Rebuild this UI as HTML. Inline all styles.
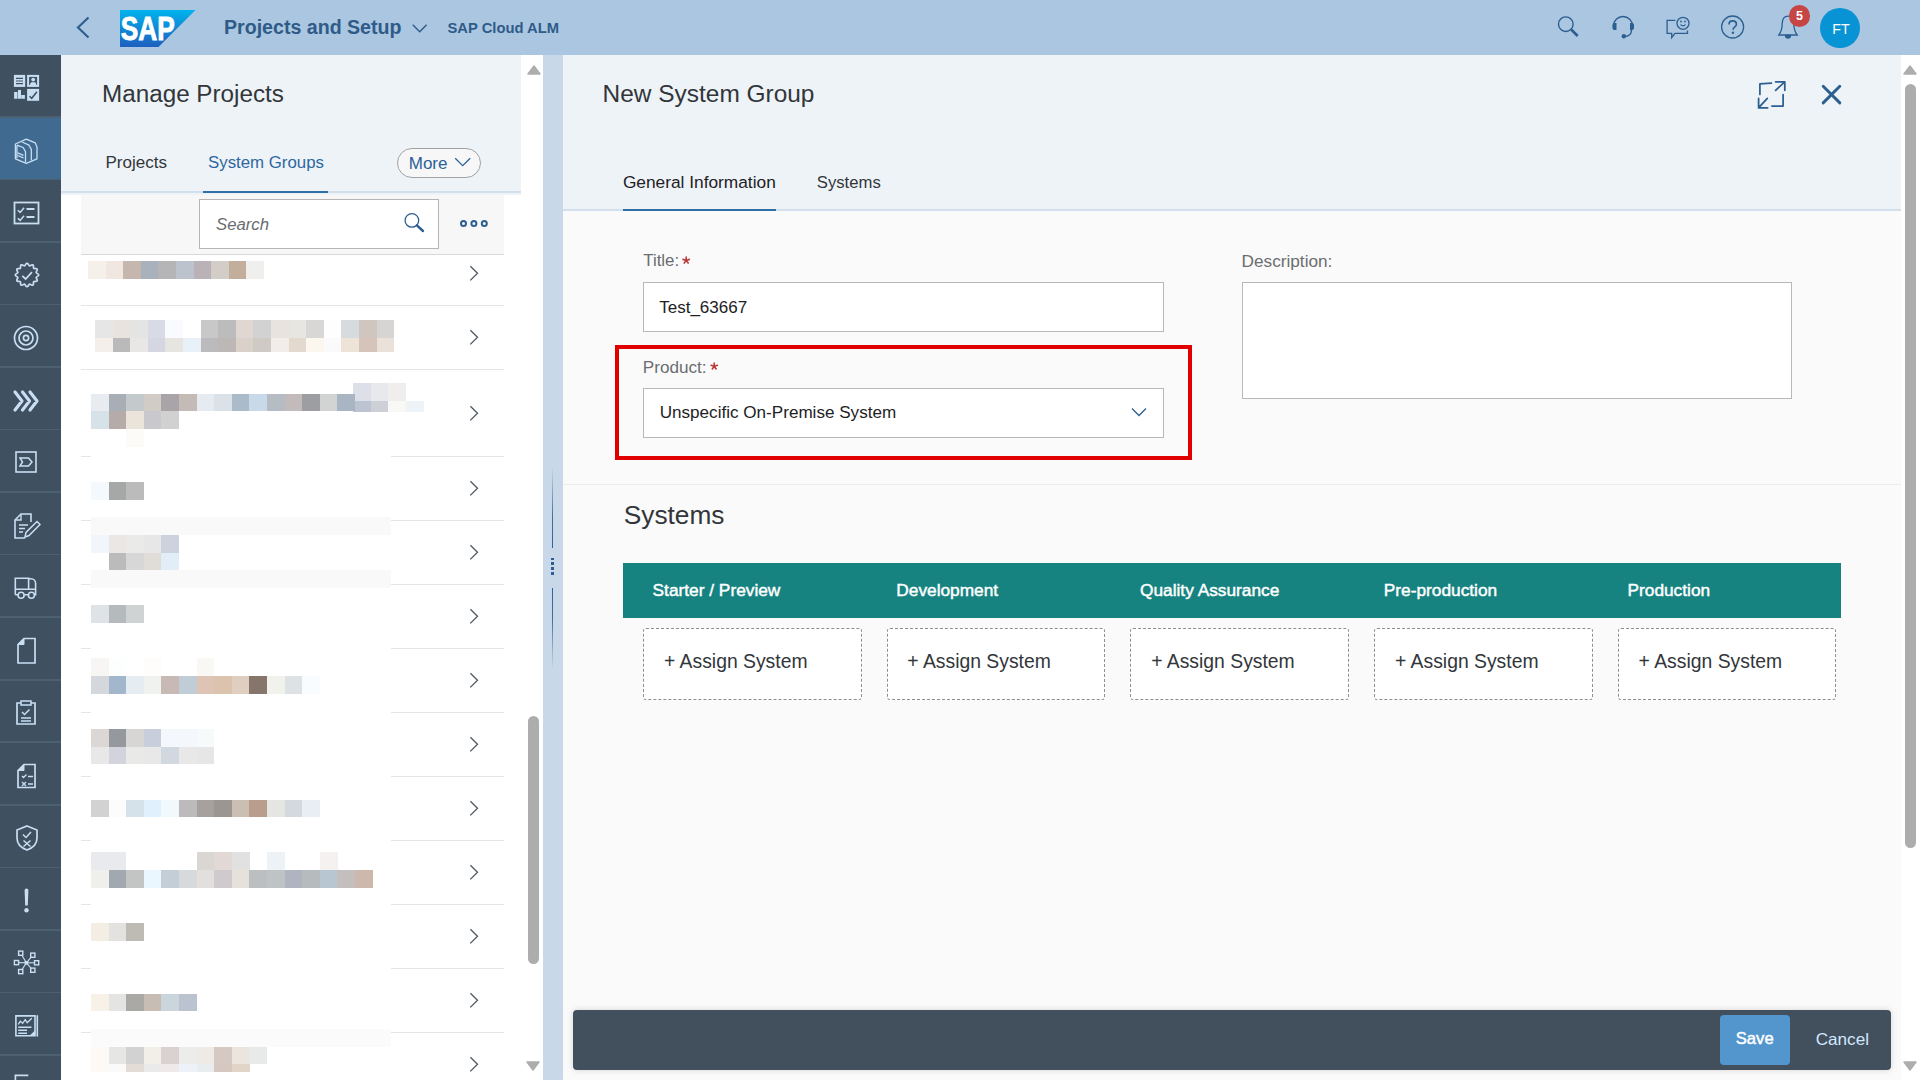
<!DOCTYPE html>
<html><head><meta charset="utf-8"><title>New System Group</title>
<style>
html,body{margin:0;padding:0;width:1920px;height:1080px;overflow:hidden;background:#fff;font-family:"Liberation Sans", sans-serif;}
.t{position:absolute;white-space:nowrap;line-height:1;}
.r{position:absolute;box-sizing:border-box;}
i{position:absolute;display:block;}
svg{overflow:visible}
</style></head><body>
<div class="r" style="left:0px;top:0px;width:1920px;height:55px;background:#abc6e0;"></div>
<svg style="position:absolute;left:74px;top:15px" width="20" height="25" viewBox="0 0 20 25"><path d="M14.5 2.5L4 12.5l10.5 10" fill="none" stroke="#2e5f8f" stroke-width="2.2"/></svg>
<svg style="position:absolute;left:120px;top:10px" width="76" height="37" viewBox="0 0 76 37">
<defs><linearGradient id="sg" x1="0" y1="0" x2="0" y2="1"><stop offset="0" stop-color="#00b3ec"/><stop offset="1" stop-color="#1f5fbf"/></linearGradient></defs>
<path d="M0 0h75.5L38.5 37H0z" fill="url(#sg)"/>
<text x="0.8" y="29.7" font-family="Liberation Sans" font-weight="bold" font-size="33" fill="#fff" stroke="#fff" stroke-width="0.9" textLength="54" lengthAdjust="spacingAndGlyphs">SAP</text>
</svg>
<div class="t" style="left:224px;top:18.01px;font-size:19.6px;color:#2e5b88;font-weight:bold;font-style:normal;">Projects and Setup</div>
<svg style="position:absolute;left:412.3px;top:24.3px" width="16" height="10" viewBox="0 0 16 10"><path d="M0.8 0.8l6.9 6.9 6.9-6.9" fill="none" stroke="#2e5b88" stroke-width="1.4"/></svg>
<div class="t" style="left:447.5px;top:20.81px;font-size:14.76px;color:#2e5b88;font-weight:bold;font-style:normal;">SAP Cloud ALM</div>
<svg style="position:absolute;left:1555px;top:14px" width="26" height="26" viewBox="0 0 26 26" fill="none" stroke="#2c5f90"><circle cx="10.8" cy="10.2" r="7.3" stroke-width="1.4"/><path d="M16.2 15.5l6.5 6.5" stroke-width="2.6"/></svg>
<svg style="position:absolute;left:1609px;top:12px" width="28" height="28" viewBox="0 0 28 28" fill="none" stroke="#2c5f90">
<path d="M4.5 15v-1.2a9.5 9.3 0 0 1 19 0v1.2" stroke-width="1.4"/>
<path d="M5 11h2.5v7H5a2 2 0 0 1-1.5-2v-3A2 2 0 0 1 5 11z" fill="#2c5f90" stroke="none"/>
<path d="M21 11h2.5a2 2 0 0 1 1.5 2v3a2 2 0 0 1-1.5 2H21z" fill="#2c5f90" stroke="none"/>
<path d="M22.5 18c0 4.5-3.5 6.5-7.5 6.5" stroke-width="1.4"/>
<circle cx="14.8" cy="24.3" r="2.2" fill="#2c5f90" stroke="none"/>
</svg>
<svg style="position:absolute;left:1664px;top:11px" width="30" height="30" viewBox="0 0 30 30" fill="none" stroke="#2c5f90" stroke-width="1.3">
<path d="M11.4 9.4H3.1v12.9h4.6v4.2l3.3-4.2h12.5v-2.9"/>
<circle cx="19" cy="12.3" r="6"/>
<path d="M16.5 13.5c1.3 1.8 3.7 1.8 5 0" stroke-width="1.2"/>
<circle cx="17" cy="10.5" r="0.9" fill="#2c5f90" stroke="none"/><circle cx="21" cy="10.5" r="0.9" fill="#2c5f90" stroke="none"/>
</svg>
<svg style="position:absolute;left:1720px;top:15px" width="26" height="26" viewBox="0 0 26 26" fill="none" stroke="#2c5f90">
<circle cx="12.6" cy="12" r="11" stroke-width="1.3"/>
<path d="M9 9.5c0-2.3 1.6-3.6 3.7-3.6s3.7 1.3 3.7 3.3c0 2.6-3.4 2.7-3.4 5.6" stroke-width="1.6"/>
<circle cx="12.9" cy="17.7" r="1.2" fill="#2c5f90" stroke="none"/>
</svg>
<svg style="position:absolute;left:1776px;top:13px" width="26" height="27" viewBox="0 0 26 27" fill="none" stroke="#2c5f90" stroke-width="1.3">
<path d="M12 3.2c-3.8 0-5.8 3-5.8 7.3 0 6-1.4 9-3.4 11.5h18.4c-2-2.5-3.4-5.5-3.4-11.5 0-4.3-2-7.3-5.8-7.3z"/>
<path d="M9.5 22.5a2.5 2.5 0 0 0 5 0z" fill="#2c5f90"/>
</svg>
<div class="r" style="left:1788.7px;top:5.2px;width:21.5px;height:21.5px;border-radius:50%;background:#c64545"></div>
<div class="t" style="left:1795.9px;top:9.62px;font-size:12.5px;color:#fff;font-weight:bold;font-style:normal;">5</div>
<div class="r" style="left:1820px;top:8px;width:40px;height:40px;border-radius:50%;background:#0893d4"></div>
<div class="t" style="left:1832.3px;top:21.68px;font-size:14.2px;color:#fff;font-weight:normal;font-style:normal;">FT</div>
<div class="r" style="left:0px;top:55px;width:61px;height:1025px;background:#3f5061;"></div>
<div class="r" style="left:0px;top:115.90px;width:61px;height:1.7px;background:#4d6072;"></div>
<div class="r" style="left:0px;top:178.45px;width:61px;height:1.7px;background:#4d6072;"></div>
<div class="r" style="left:0px;top:241.00px;width:61px;height:1.7px;background:#4d6072;"></div>
<div class="r" style="left:0px;top:303.55px;width:61px;height:1.7px;background:#4d6072;"></div>
<div class="r" style="left:0px;top:366.10px;width:61px;height:1.7px;background:#4d6072;"></div>
<div class="r" style="left:0px;top:428.65px;width:61px;height:1.7px;background:#4d6072;"></div>
<div class="r" style="left:0px;top:491.20px;width:61px;height:1.7px;background:#4d6072;"></div>
<div class="r" style="left:0px;top:553.75px;width:61px;height:1.7px;background:#4d6072;"></div>
<div class="r" style="left:0px;top:616.30px;width:61px;height:1.7px;background:#4d6072;"></div>
<div class="r" style="left:0px;top:678.85px;width:61px;height:1.7px;background:#4d6072;"></div>
<div class="r" style="left:0px;top:741.40px;width:61px;height:1.7px;background:#4d6072;"></div>
<div class="r" style="left:0px;top:803.95px;width:61px;height:1.7px;background:#4d6072;"></div>
<div class="r" style="left:0px;top:866.50px;width:61px;height:1.7px;background:#4d6072;"></div>
<div class="r" style="left:0px;top:929.05px;width:61px;height:1.7px;background:#4d6072;"></div>
<div class="r" style="left:0px;top:991.60px;width:61px;height:1.7px;background:#4d6072;"></div>
<div class="r" style="left:0px;top:1054.15px;width:61px;height:1.7px;background:#4d6072;"></div>
<div class="r" style="left:0px;top:1116.70px;width:61px;height:1.7px;background:#4d6072;"></div>
<div class="r" style="left:0px;top:118px;width:61px;height:61px;background:#406a8f;"></div>
<svg style="position:absolute;left:0;top:0" width="1" height="1" fill="none" stroke="#c8def3">
<rect x="13.9" y="74.9" width="11.3" height="12" fill="#c8def3" stroke="none"/>
<path d="M16 78.4h7M16 81h7M16 83.6h7" stroke="#3f5061" stroke-width="1.1"/>
<rect x="28.1" y="75.9" width="10" height="10" stroke-width="2"/>
<circle cx="33.2" cy="79.6" r="1.9" fill="#c8def3" stroke="none"/>
<path d="M30.2 85.1v-1.2c0-1 1-1.6 2-1.6h2c1 0 2 .6 2 1.6v1.2z" fill="#c8def3" stroke="none"/>
<path d="M14.1 98.8V92h3.4v6.8zM18 98.8V90h3v8.8zM21.2 98.8V95h3.7v3.8z" fill="#c8def3" stroke="none"/>
<rect x="27.1" y="88.9" width="12" height="11.9" fill="#c8def3" stroke="none"/>
<path d="M29.5 96.3l2.2 2 5.2-6.6" stroke="#3f5061" stroke-width="1.5"/>
</svg>
<svg style="position:absolute;left:0;top:0" width="1" height="1" fill="none" stroke="#c8def3" stroke-width="1.3" stroke-linejoin="round">
<path d="M15.4 144L26.3 139.1L35.2 142.8L37 147.1V158.8L26.3 163.4L15.4 158.8Z"/>
<path d="M16.9 145.2L23.2 147.5L25.5 151.8V162.2M16.9 145.2V158.3"/>
<path d="M22 142L29 145.2L31.3 149.4V160.3"/>
<path d="M17.7 152.9L23.5 155.3M17.7 155.5L23.5 157.9"/>
</svg>
<svg style="position:absolute;left:13px;top:201px" width="27" height="24" viewBox="0 0 27 24" fill="none" stroke="#c8def3" stroke-width="1.6">
<rect x="1.5" y="1.5" width="24" height="21" stroke-width="1.8"/>
<path d="M4.8 9.2l2.3 2.2 4-4.6M4.8 17.2l2.3 2.2 4-4.6" stroke-width="1.5"/>
<path d="M13.5 8h8M13.5 16h8" stroke-width="2"/>
</svg>
<svg style="position:absolute;left:13.5px;top:262px" width="26" height="26" viewBox="0 0 26 26" fill="none" stroke="#c8def3" stroke-width="1.6">
<path d="M13.00 1.30 L13.60 1.53 L14.14 2.12 L14.61 2.87 L15.02 3.50 L15.46 3.82 L16.00 3.77 L16.68 3.42 L17.45 3.01 L18.22 2.76 L18.85 2.87 L19.26 3.36 L19.43 4.15 L19.46 5.03 L19.50 5.78 L19.72 6.28 L20.22 6.50 L20.97 6.54 L21.85 6.57 L22.64 6.74 L23.13 7.15 L23.24 7.78 L22.99 8.55 L22.58 9.32 L22.23 10.00 L22.18 10.54 L22.50 10.98 L23.13 11.39 L23.88 11.86 L24.47 12.40 L24.70 13.00 L24.47 13.60 L23.88 14.14 L23.13 14.61 L22.50 15.02 L22.18 15.46 L22.23 16.00 L22.58 16.68 L22.99 17.45 L23.24 18.22 L23.13 18.85 L22.64 19.26 L21.85 19.43 L20.97 19.46 L20.22 19.50 L19.72 19.72 L19.50 20.22 L19.46 20.97 L19.43 21.85 L19.26 22.64 L18.85 23.13 L18.22 23.24 L17.45 22.99 L16.68 22.58 L16.00 22.23 L15.46 22.18 L15.02 22.50 L14.61 23.13 L14.14 23.88 L13.60 24.47 L13.00 24.70 L12.40 24.47 L11.86 23.88 L11.39 23.13 L10.98 22.50 L10.54 22.18 L10.00 22.23 L9.32 22.58 L8.55 22.99 L7.78 23.24 L7.15 23.13 L6.74 22.64 L6.57 21.85 L6.54 20.97 L6.50 20.22 L6.28 19.72 L5.78 19.50 L5.03 19.46 L4.15 19.43 L3.36 19.26 L2.87 18.85 L2.76 18.22 L3.01 17.45 L3.42 16.68 L3.77 16.00 L3.82 15.46 L3.50 15.02 L2.87 14.61 L2.12 14.14 L1.53 13.60 L1.30 13.00 L1.53 12.40 L2.12 11.86 L2.87 11.39 L3.50 10.98 L3.82 10.54 L3.77 10.00 L3.42 9.32 L3.01 8.55 L2.76 7.78 L2.87 7.15 L3.36 6.74 L4.15 6.57 L5.03 6.54 L5.78 6.50 L6.28 6.28 L6.50 5.78 L6.54 5.03 L6.57 4.15 L6.74 3.36 L7.15 2.87 L7.78 2.76 L8.55 3.01 L9.32 3.42 L10.00 3.77 L10.54 3.82 L10.98 3.50 L11.39 2.87 L11.86 2.12 L12.40 1.53 L13.00 1.30Z" stroke-width="1.7"/>
<path d="M8.3 13.8l3.3 3.2 6.4-6.8" stroke-width="1.8"/>
</svg>
<svg style="position:absolute;left:13px;top:325px" width="26" height="26" viewBox="0 0 26 26" fill="none" stroke="#c8def3" stroke-width="1.6">
<circle cx="13" cy="13" r="11.5" stroke-width="1.7"/>
<circle cx="13" cy="13" r="7" stroke-width="1.7"/>
<circle cx="13" cy="13" r="2.6" stroke-width="1.7"/>
</svg>
<svg style="position:absolute;left:13px;top:389px" width="27" height="24" viewBox="0 0 27 24" fill="none" stroke="#c8def3" stroke-width="1.6">
<path d="M2 3l7 9-7 9M9.5 3l7 9-7 9M17 3l7 9-7 9" stroke-width="3.2" stroke-linejoin="round" stroke-linecap="round"/>
</svg>
<svg style="position:absolute;left:15px;top:451px" width="22" height="22" viewBox="0 0 22 22" fill="none" stroke="#c8def3" stroke-width="1.6">
<rect x="1" y="1" width="20" height="20" stroke-width="1.6"/>
<path d="M5 7h8.5l3.5 4-3.5 4H5l2.5-4z" stroke-width="1.5"/>
</svg>
<svg style="position:absolute;left:13px;top:512px" width="28" height="28" viewBox="0 0 28 28" fill="none" stroke="#c8def3" stroke-width="1.6">
<path d="M12 26H2V8l6-6h10v8" stroke-width="1.6"/>
<path d="M2 8h6V2" stroke-width="1.4"/>
<path d="M6 13h9M6 16.5h6M6 20h4" stroke-width="1.4"/>
<path d="M12 25l1-4.5 11-11 3 3-11 11z" stroke-width="1.5"/>
</svg>
<svg style="position:absolute;left:0;top:0" width="1" height="1" fill="none" stroke="#c8def3" stroke-width="1.6">
<path d="M15.3 594.8V578.3H28.6V589.3"/>
<path d="M28.6 578.8H31a4.6 4.6 0 0 1 4.6 4.6V594.8H15.3M15.3 589.3H35.6"/>
<circle cx="21.1" cy="595.2" r="3" fill="#3f5061"/>
<circle cx="31.4" cy="595.2" r="3" fill="#3f5061"/>
</svg>
<svg style="position:absolute;left:16px;top:637px" width="21" height="28" viewBox="0 0 21 28" fill="none" stroke="#c8def3" stroke-width="1.6">
<path d="M2 7.5l6-6h11v24.5H2z" stroke-width="1.7"/>
<path d="M2 7.5h6v-6z" fill="#c8def3" stroke-width="1"/>
</svg>
<svg style="position:absolute;left:15px;top:698px" width="22" height="28" viewBox="0 0 22 28" fill="none" stroke="#c8def3" stroke-width="1.6">
<path d="M6 5H2v21h18V5h-4" stroke-width="1.7"/>
<path d="M6 3h10v4H6z" stroke-width="1.5"/>
<path d="M7 14l2.5 2.5 5-5" stroke-width="1.5"/>
<path d="M6 20h10M6 23h10" stroke-width="1.4"/>
</svg>
<svg style="position:absolute;left:16px;top:763px" width="21" height="26" viewBox="0 0 21 26" fill="none" stroke="#c8def3" stroke-width="1.6">
<path d="M2 7.5l6-6h11v23H2z" stroke-width="1.7"/>
<path d="M2 7.5h6v-6z" fill="#c8def3" stroke-width="1"/>
<path d="M6 13l1.5 1.5 3-3M6 19l4 4M10 19l-4 4M12 13.5h5M12 21h5" stroke-width="1.3"/>
</svg>
<svg style="position:absolute;left:14.8px;top:824px" width="24" height="28" viewBox="0 0 24 28" fill="none" stroke="#c8def3" stroke-width="1.6">
<path d="M12 2l10 4v8c0 6-4.5 10-10 12C6.5 24 2 20 2 14V6z" stroke-width="1.7"/>
<path d="M8 10.5l3 3 5-5.5M8.5 16.5l7 6M15.5 16.5l-7 6" stroke-width="1.5"/>
</svg>
<svg style="position:absolute;left:0;top:0" width="1" height="1">
<path d="M24.6 890.5a1.9 1.9 0 0 1 3.8 0L27.8 905.5h-2.6z" fill="#c8def3"/>
<circle cx="26.5" cy="910.3" r="2.2" fill="#c8def3"/>
</svg>
<svg style="position:absolute;left:0;top:0" width="1" height="1" fill="none" stroke="#c8def3"><path d="M26.4 962.8L20.7 953.2" stroke-width="1.1"/><path d="M26.4 962.8L32.8 955.2" stroke-width="1.1"/><path d="M26.4 962.8L16.5 962.6" stroke-width="1.1"/><path d="M26.4 962.8L36.6 962.8" stroke-width="1.1"/><path d="M26.4 962.8L20.7 971.6" stroke-width="1.1"/><path d="M26.4 962.8L32.8 970.2" stroke-width="1.1"/><rect x="18.6" y="951.1" width="4.2" height="4.2" fill="#3f5061" stroke-width="1.4"/><rect x="30.7" y="953.1" width="4.2" height="4.2" fill="#3f5061" stroke-width="1.4"/><rect x="14.4" y="960.5" width="4.2" height="4.2" fill="#3f5061" stroke-width="1.4"/><rect x="34.5" y="960.7" width="4.2" height="4.2" fill="#3f5061" stroke-width="1.4"/><rect x="18.6" y="969.5" width="4.2" height="4.2" fill="#3f5061" stroke-width="1.4"/><rect x="30.7" y="968.1" width="4.2" height="4.2" fill="#3f5061" stroke-width="1.4"/><rect x="24.6" y="961" width="3.6" height="3.6" fill="#c8def3" stroke="none"/></svg>
<svg style="position:absolute;left:0;top:0" width="1" height="1" fill="none" stroke="#c8def3">
<path d="M15.9 1015.9H35V1035.8H15.9Z" stroke-width="1.6"/>
<path d="M37.3 1015.2V1036.6" stroke-width="1.6"/>
<path d="M29.8 1035.6L35.2 1030.2V1035.6Z" fill="#c8def3" stroke="none"/>
<path d="M18.2 1024.3L20.3 1021.3L22.6 1023.3L25.2 1019.6L27.2 1022.7L31.8 1018.2" stroke-width="1.3"/>
<path d="M18.2 1027.3H31.5M18.2 1030.3H27M18.2 1033.2H27" stroke-width="1.4"/>
</svg>
<svg style="position:absolute;left:0;top:0" width="1" height="1" fill="none" stroke="#c8def3"><path d="M15.4 1081V1075.3H28.3" stroke-width="1.7"/></svg>
<div class="r" style="left:61px;top:55px;width:460px;height:140px;background:#eef3f8;"></div>
<div class="t" style="left:102px;top:81.97px;font-size:24.25px;color:#32363a;font-weight:normal;font-style:normal;">Manage Projects</div>
<div class="t" style="left:105.4px;top:154.32px;font-size:17.05px;color:#32363a;font-weight:normal;font-style:normal;">Projects</div>
<div class="t" style="left:208px;top:154.50px;font-size:16.83px;color:#2d67a0;font-weight:normal;font-style:normal;">System Groups</div>
<div class="r" style="left:397px;top:148.3px;width:83.5px;height:29.5px;border:1px solid #a0a2a4;border-radius:15px;background:#f7f7f7"></div>
<div class="t" style="left:408.75px;top:155.01px;font-size:17.0px;color:#2a6199;font-weight:normal;font-style:normal;">More</div>
<svg style="position:absolute;left:454.3px;top:157px" width="17" height="11" viewBox="0 0 17 11"><path d="M1.2 1.2l7.5 7.5 7.5-7.5" fill="none" stroke="#2a6199" stroke-width="1.3"/></svg>
<div class="r" style="left:61px;top:190.8px;width:460px;height:2.4px;background:#d2dfec;"></div>
<div class="r" style="left:203px;top:190.8px;width:125px;height:2.4px;background:#306ea6;"></div>
<div class="r" style="left:61px;top:195px;width:460px;height:885px;background:#ffffff;"></div>
<div class="r" style="left:81px;top:195px;width:423px;height:59px;background:#f7f7f7;"></div>
<div class="r" style="left:81px;top:254px;width:423px;height:1.2px;background:#d9d9d9;"></div>
<div class="r" style="left:199.4px;top:199.4px;width:239.4px;height:49.3px;border:1px solid #b5b5b5;background:#fff"></div>
<div class="t" style="left:216px;top:216.84px;font-size:16.73px;color:#6a6d70;font-weight:normal;font-style:italic;">Search</div>
<svg style="position:absolute;left:0;top:0" width="1" height="1" fill="none" stroke="#2c5f90"><circle cx="411.9" cy="220.4" r="6.8" stroke-width="1.3"/><path d="M416.9 225.3L423 231" stroke-width="2.4" stroke-linecap="round"/></svg>
<svg style="position:absolute;left:0;top:0" width="1" height="1" fill="none" stroke="#2c5f90" stroke-width="2"><circle cx="463.5" cy="223.5" r="2.5"/><circle cx="473.9" cy="223.5" r="2.5"/><circle cx="484.3" cy="223.5" r="2.5"/></svg>
<div class="r" style="left:81px;top:305px;width:423px;height:1.2px;background:#e5e5e5;"></div>
<div class="r" style="left:81px;top:369px;width:423px;height:1.2px;background:#e5e5e5;"></div>
<div class="r" style="left:81px;top:456px;width:10px;height:1.2px;background:#e5e5e5;"></div>
<div class="r" style="left:391px;top:456px;width:113px;height:1.2px;background:#e5e5e5;"></div>
<div class="r" style="left:81px;top:520px;width:10px;height:1.2px;background:#e5e5e5;"></div>
<div class="r" style="left:391px;top:520px;width:113px;height:1.2px;background:#e5e5e5;"></div>
<div class="r" style="left:81px;top:584px;width:10px;height:1.2px;background:#e5e5e5;"></div>
<div class="r" style="left:391px;top:584px;width:113px;height:1.2px;background:#e5e5e5;"></div>
<div class="r" style="left:81px;top:648px;width:10px;height:1.2px;background:#e5e5e5;"></div>
<div class="r" style="left:391px;top:648px;width:113px;height:1.2px;background:#e5e5e5;"></div>
<div class="r" style="left:81px;top:712px;width:10px;height:1.2px;background:#e5e5e5;"></div>
<div class="r" style="left:391px;top:712px;width:113px;height:1.2px;background:#e5e5e5;"></div>
<div class="r" style="left:81px;top:776px;width:10px;height:1.2px;background:#e5e5e5;"></div>
<div class="r" style="left:391px;top:776px;width:113px;height:1.2px;background:#e5e5e5;"></div>
<div class="r" style="left:81px;top:840px;width:10px;height:1.2px;background:#e5e5e5;"></div>
<div class="r" style="left:391px;top:840px;width:113px;height:1.2px;background:#e5e5e5;"></div>
<div class="r" style="left:81px;top:904px;width:10px;height:1.2px;background:#e5e5e5;"></div>
<div class="r" style="left:391px;top:904px;width:113px;height:1.2px;background:#e5e5e5;"></div>
<div class="r" style="left:81px;top:968px;width:10px;height:1.2px;background:#e5e5e5;"></div>
<div class="r" style="left:391px;top:968px;width:113px;height:1.2px;background:#e5e5e5;"></div>
<div class="r" style="left:81px;top:1032px;width:10px;height:1.2px;background:#e5e5e5;"></div>
<div class="r" style="left:391px;top:1032px;width:113px;height:1.2px;background:#e5e5e5;"></div>
<svg style="position:absolute;left:468px;top:264px" width="12" height="18" viewBox="0 0 12 18"><path d="M2.4 2.2l7.1 7.1-7.2 7.1" fill="none" stroke="#4e5864" stroke-width="1.3"/></svg>
<svg style="position:absolute;left:468px;top:328px" width="12" height="18" viewBox="0 0 12 18"><path d="M2.4 2.2l7.1 7.1-7.2 7.1" fill="none" stroke="#4e5864" stroke-width="1.3"/></svg>
<svg style="position:absolute;left:468px;top:404px" width="12" height="18" viewBox="0 0 12 18"><path d="M2.4 2.2l7.1 7.1-7.2 7.1" fill="none" stroke="#4e5864" stroke-width="1.3"/></svg>
<svg style="position:absolute;left:468px;top:479px" width="12" height="18" viewBox="0 0 12 18"><path d="M2.4 2.2l7.1 7.1-7.2 7.1" fill="none" stroke="#4e5864" stroke-width="1.3"/></svg>
<svg style="position:absolute;left:468px;top:543px" width="12" height="18" viewBox="0 0 12 18"><path d="M2.4 2.2l7.1 7.1-7.2 7.1" fill="none" stroke="#4e5864" stroke-width="1.3"/></svg>
<svg style="position:absolute;left:468px;top:607px" width="12" height="18" viewBox="0 0 12 18"><path d="M2.4 2.2l7.1 7.1-7.2 7.1" fill="none" stroke="#4e5864" stroke-width="1.3"/></svg>
<svg style="position:absolute;left:468px;top:671px" width="12" height="18" viewBox="0 0 12 18"><path d="M2.4 2.2l7.1 7.1-7.2 7.1" fill="none" stroke="#4e5864" stroke-width="1.3"/></svg>
<svg style="position:absolute;left:468px;top:735px" width="12" height="18" viewBox="0 0 12 18"><path d="M2.4 2.2l7.1 7.1-7.2 7.1" fill="none" stroke="#4e5864" stroke-width="1.3"/></svg>
<svg style="position:absolute;left:468px;top:799px" width="12" height="18" viewBox="0 0 12 18"><path d="M2.4 2.2l7.1 7.1-7.2 7.1" fill="none" stroke="#4e5864" stroke-width="1.3"/></svg>
<svg style="position:absolute;left:468px;top:863px" width="12" height="18" viewBox="0 0 12 18"><path d="M2.4 2.2l7.1 7.1-7.2 7.1" fill="none" stroke="#4e5864" stroke-width="1.3"/></svg>
<svg style="position:absolute;left:468px;top:927px" width="12" height="18" viewBox="0 0 12 18"><path d="M2.4 2.2l7.1 7.1-7.2 7.1" fill="none" stroke="#4e5864" stroke-width="1.3"/></svg>
<svg style="position:absolute;left:468px;top:991px" width="12" height="18" viewBox="0 0 12 18"><path d="M2.4 2.2l7.1 7.1-7.2 7.1" fill="none" stroke="#4e5864" stroke-width="1.3"/></svg>
<svg style="position:absolute;left:468px;top:1055px" width="12" height="18" viewBox="0 0 12 18"><path d="M2.4 2.2l7.1 7.1-7.2 7.1" fill="none" stroke="#4e5864" stroke-width="1.3"/></svg>
<i style="left:88.0px;top:261px;width:17.9px;height:17.8px;background:#f6f0ea"></i>
<i style="left:105.6px;top:261px;width:17.9px;height:17.8px;background:#f1e7e1"></i>
<i style="left:123.2px;top:261px;width:17.9px;height:17.8px;background:#c6b7ae"></i>
<i style="left:140.8px;top:261px;width:17.9px;height:17.8px;background:#a9b2bc"></i>
<i style="left:158.4px;top:261px;width:17.9px;height:17.8px;background:#b5b5b7"></i>
<i style="left:176.0px;top:261px;width:17.9px;height:17.8px;background:#bdc3cd"></i>
<i style="left:193.6px;top:261px;width:17.9px;height:17.8px;background:#bbb2b8"></i>
<i style="left:211.2px;top:261px;width:17.9px;height:17.8px;background:#d3cdc8"></i>
<i style="left:228.8px;top:261px;width:17.9px;height:17.8px;background:#c2ae9a"></i>
<i style="left:246.4px;top:261px;width:17.9px;height:17.8px;background:#efefed"></i>
<i style="left:95.0px;top:320px;width:17.9px;height:18px;background:#e6e6e6"></i>
<i style="left:112.6px;top:320px;width:17.9px;height:18px;background:#e8e3dd"></i>
<i style="left:130.2px;top:320px;width:17.9px;height:18px;background:#e4e4e4"></i>
<i style="left:147.8px;top:320px;width:17.9px;height:18px;background:#d8dae6"></i>
<i style="left:165.4px;top:320px;width:17.9px;height:18px;background:#fafbfe"></i>
<i style="left:200.6px;top:320px;width:17.9px;height:18px;background:#c8c8c9"></i>
<i style="left:218.2px;top:320px;width:17.9px;height:18px;background:#bcbcbd"></i>
<i style="left:235.8px;top:320px;width:17.9px;height:18px;background:#e0d7d3"></i>
<i style="left:253.4px;top:320px;width:17.9px;height:18px;background:#d2d2d2"></i>
<i style="left:271.0px;top:320px;width:17.9px;height:18px;background:#e8e3de"></i>
<i style="left:288.6px;top:320px;width:17.9px;height:18px;background:#e8e6e1"></i>
<i style="left:306.2px;top:320px;width:17.9px;height:18px;background:#d8d7d5"></i>
<i style="left:323.8px;top:320px;width:17.9px;height:18px;background:#fefefe"></i>
<i style="left:341.4px;top:320px;width:17.9px;height:18px;background:#d6dbde"></i>
<i style="left:359.0px;top:320px;width:17.9px;height:18px;background:#d0c6c0"></i>
<i style="left:376.6px;top:320px;width:17.9px;height:18px;background:#d6d5d3"></i>
<i style="left:95.0px;top:338px;width:17.9px;height:14px;background:#f4efeb"></i>
<i style="left:112.6px;top:338px;width:17.9px;height:14px;background:#bababa"></i>
<i style="left:130.2px;top:338px;width:17.9px;height:14px;background:#e9e6e6"></i>
<i style="left:147.8px;top:338px;width:17.9px;height:14px;background:#d4d7e2"></i>
<i style="left:165.4px;top:338px;width:17.9px;height:14px;background:#e6e5e0"></i>
<i style="left:183.0px;top:338px;width:17.9px;height:14px;background:#e8f0f8"></i>
<i style="left:200.6px;top:338px;width:17.9px;height:14px;background:#bbbbbd"></i>
<i style="left:218.2px;top:338px;width:17.9px;height:14px;background:#bdb8b5"></i>
<i style="left:235.8px;top:338px;width:17.9px;height:14px;background:#dbd1cb"></i>
<i style="left:253.4px;top:338px;width:17.9px;height:14px;background:#cfcac4"></i>
<i style="left:271.0px;top:338px;width:17.9px;height:14px;background:#f2eceb"></i>
<i style="left:288.6px;top:338px;width:17.9px;height:14px;background:#e3d9cf"></i>
<i style="left:306.2px;top:338px;width:17.9px;height:14px;background:#fcf7ee"></i>
<i style="left:323.8px;top:338px;width:17.9px;height:14px;background:#fafafa"></i>
<i style="left:341.4px;top:338px;width:17.9px;height:14px;background:#ede3d7"></i>
<i style="left:359.0px;top:338px;width:17.9px;height:14px;background:#d6c4bb"></i>
<i style="left:376.6px;top:338px;width:17.9px;height:14px;background:#e9e1da"></i>
<i style="left:353.0px;top:383px;width:17.9px;height:18px;background:#dde0e8"></i>
<i style="left:370.6px;top:383px;width:17.9px;height:18px;background:#e8e9ed"></i>
<i style="left:388.2px;top:383px;width:17.9px;height:18px;background:#efeeec"></i>
<i style="left:353.0px;top:401px;width:17.9px;height:11px;background:#bbc4d0"></i>
<i style="left:370.6px;top:401px;width:17.9px;height:11px;background:#cdd0d6"></i>
<i style="left:388.2px;top:401px;width:17.9px;height:11px;background:#f8f8f6"></i>
<i style="left:405.8px;top:401px;width:17.9px;height:11px;background:#eef3f8"></i>
<i style="left:91.0px;top:394px;width:17.9px;height:17px;background:#e8ebf0"></i>
<i style="left:108.6px;top:394px;width:17.9px;height:17px;background:#a7aeb6"></i>
<i style="left:126.2px;top:394px;width:17.9px;height:17px;background:#c4c9cc"></i>
<i style="left:143.8px;top:394px;width:17.9px;height:17px;background:#d1cdc6"></i>
<i style="left:161.4px;top:394px;width:17.9px;height:17px;background:#a9a4a8"></i>
<i style="left:179.0px;top:394px;width:17.9px;height:17px;background:#c4bab6"></i>
<i style="left:196.6px;top:394px;width:17.9px;height:17px;background:#e6eaf1"></i>
<i style="left:214.2px;top:394px;width:17.9px;height:17px;background:#dbe1e9"></i>
<i style="left:231.8px;top:394px;width:17.9px;height:17px;background:#abbbc9"></i>
<i style="left:249.4px;top:394px;width:17.9px;height:17px;background:#c8d9ea"></i>
<i style="left:267.0px;top:394px;width:17.9px;height:17px;background:#b5bcc3"></i>
<i style="left:284.6px;top:394px;width:17.9px;height:17px;background:#c3bbbb"></i>
<i style="left:302.2px;top:394px;width:17.9px;height:17px;background:#9d9ea2"></i>
<i style="left:319.8px;top:394px;width:17.9px;height:17px;background:#d2d3d3"></i>
<i style="left:337.4px;top:394px;width:17.9px;height:17px;background:#a9b5c3"></i>
<i style="left:91.0px;top:411px;width:17.9px;height:18px;background:#d7e1e8"></i>
<i style="left:108.6px;top:411px;width:17.9px;height:18px;background:#b5aca9"></i>
<i style="left:126.2px;top:411px;width:17.9px;height:18px;background:#ebe4db"></i>
<i style="left:143.8px;top:411px;width:17.9px;height:18px;background:#c9c8cd"></i>
<i style="left:161.4px;top:411px;width:17.9px;height:18px;background:#d1d1d1"></i>
<i style="left:126.2px;top:429px;width:17.9px;height:18px;background:#fcfbf8"></i>
<i style="left:91.0px;top:482px;width:17.9px;height:18px;background:#f4f9fd"></i>
<i style="left:108.6px;top:482px;width:17.9px;height:18px;background:#a6a8a7"></i>
<i style="left:126.2px;top:482px;width:17.9px;height:18px;background:#bcbbbb"></i>
<i style="left:91.0px;top:535px;width:17.9px;height:17.6px;background:#f0f6fb"></i>
<i style="left:108.6px;top:535px;width:17.9px;height:17.6px;background:#ebe7e4"></i>
<i style="left:126.2px;top:535px;width:17.9px;height:17.6px;background:#eaeae9"></i>
<i style="left:143.8px;top:535px;width:17.9px;height:17.6px;background:#e7e7e7"></i>
<i style="left:161.4px;top:535px;width:17.9px;height:17.6px;background:#ccd2de"></i>
<i style="left:108.6px;top:552.6px;width:17.9px;height:17.6px;background:#bbbbbb"></i>
<i style="left:126.2px;top:552.6px;width:17.9px;height:17.6px;background:#d7d7d7"></i>
<i style="left:143.8px;top:552.6px;width:17.9px;height:17.6px;background:#e0dcd8"></i>
<i style="left:161.4px;top:552.6px;width:17.9px;height:17.6px;background:#e1eef8"></i>
<i style="left:91.0px;top:605px;width:17.9px;height:18px;background:#dfe3e8"></i>
<i style="left:108.6px;top:605px;width:17.9px;height:18px;background:#b5babd"></i>
<i style="left:126.2px;top:605px;width:17.9px;height:18px;background:#d0d3d3"></i>
<i style="left:91.0px;top:658px;width:17.9px;height:18px;background:#f7f6f4"></i>
<i style="left:108.6px;top:658px;width:17.9px;height:18px;background:#fdfefe"></i>
<i style="left:143.8px;top:658px;width:17.9px;height:18px;background:#fefdfc"></i>
<i style="left:196.6px;top:658px;width:17.9px;height:18px;background:#f9f8f4"></i>
<i style="left:91.0px;top:676px;width:17.9px;height:18px;background:#d4d8dc"></i>
<i style="left:108.6px;top:676px;width:17.9px;height:18px;background:#a2b7cb"></i>
<i style="left:126.2px;top:676px;width:17.9px;height:18px;background:#e6edf2"></i>
<i style="left:143.8px;top:676px;width:17.9px;height:18px;background:#f0f2f0"></i>
<i style="left:161.4px;top:676px;width:17.9px;height:18px;background:#c9b9b5"></i>
<i style="left:179.0px;top:676px;width:17.9px;height:18px;background:#c0ccd6"></i>
<i style="left:196.6px;top:676px;width:17.9px;height:18px;background:#dfc3b5"></i>
<i style="left:214.2px;top:676px;width:17.9px;height:18px;background:#dcc3ae"></i>
<i style="left:231.8px;top:676px;width:17.9px;height:18px;background:#e0cfc0"></i>
<i style="left:249.4px;top:676px;width:17.9px;height:18px;background:#86756a"></i>
<i style="left:267.0px;top:676px;width:17.9px;height:18px;background:#f2f2ec"></i>
<i style="left:284.6px;top:676px;width:17.9px;height:18px;background:#dde2e5"></i>
<i style="left:302.2px;top:676px;width:17.9px;height:18px;background:#f8fcff"></i>
<i style="left:91.0px;top:729px;width:17.9px;height:18px;background:#dcd7d4"></i>
<i style="left:108.6px;top:729px;width:17.9px;height:18px;background:#95989d"></i>
<i style="left:126.2px;top:729px;width:17.9px;height:18px;background:#d8d6d4"></i>
<i style="left:143.8px;top:729px;width:17.9px;height:18px;background:#c8cedb"></i>
<i style="left:161.4px;top:729px;width:17.9px;height:18px;background:#f4f8fc"></i>
<i style="left:179.0px;top:729px;width:17.9px;height:18px;background:#f4f8fc"></i>
<i style="left:196.6px;top:729px;width:17.9px;height:18px;background:#f6fafa"></i>
<i style="left:91.0px;top:747px;width:17.9px;height:17px;background:#e8e8e8"></i>
<i style="left:108.6px;top:747px;width:17.9px;height:17px;background:#d3d3de"></i>
<i style="left:126.2px;top:747px;width:17.9px;height:17px;background:#e9e9e8"></i>
<i style="left:143.8px;top:747px;width:17.9px;height:17px;background:#e7e8e7"></i>
<i style="left:161.4px;top:747px;width:17.9px;height:17px;background:#d1d8df"></i>
<i style="left:179.0px;top:747px;width:17.9px;height:17px;background:#e7e8e7"></i>
<i style="left:196.6px;top:747px;width:17.9px;height:17px;background:#e6e6e6"></i>
<i style="left:91.0px;top:800px;width:17.9px;height:17px;background:#d2d2d2"></i>
<i style="left:108.6px;top:800px;width:17.9px;height:17px;background:#fbfcfb"></i>
<i style="left:126.2px;top:800px;width:17.9px;height:17px;background:#d6e2ea"></i>
<i style="left:143.8px;top:800px;width:17.9px;height:17px;background:#e0f1fd"></i>
<i style="left:161.4px;top:800px;width:17.9px;height:17px;background:#f2f9fc"></i>
<i style="left:179.0px;top:800px;width:17.9px;height:17px;background:#bcbabb"></i>
<i style="left:196.6px;top:800px;width:17.9px;height:17px;background:#a6a19d"></i>
<i style="left:214.2px;top:800px;width:17.9px;height:17px;background:#9b9692"></i>
<i style="left:231.8px;top:800px;width:17.9px;height:17px;background:#cbbfb3"></i>
<i style="left:249.4px;top:800px;width:17.9px;height:17px;background:#b99d8d"></i>
<i style="left:267.0px;top:800px;width:17.9px;height:17px;background:#e5e5e1"></i>
<i style="left:284.6px;top:800px;width:17.9px;height:17px;background:#d4d9dd"></i>
<i style="left:302.2px;top:800px;width:17.9px;height:17px;background:#e9edf4"></i>
<i style="left:91.0px;top:852px;width:17.9px;height:18px;background:#e9eaee"></i>
<i style="left:108.6px;top:852px;width:17.9px;height:18px;background:#e9eaee"></i>
<i style="left:196.6px;top:852px;width:17.9px;height:18px;background:#dad7d3"></i>
<i style="left:214.2px;top:852px;width:17.9px;height:18px;background:#e2d9d7"></i>
<i style="left:231.8px;top:852px;width:17.9px;height:18px;background:#e1e1e1"></i>
<i style="left:267.0px;top:852px;width:17.9px;height:18px;background:#edf2f6"></i>
<i style="left:319.8px;top:852px;width:17.9px;height:18px;background:#f4f1f0"></i>
<i style="left:91.0px;top:870px;width:17.9px;height:18px;background:#efefec"></i>
<i style="left:108.6px;top:870px;width:17.9px;height:18px;background:#a2a8b0"></i>
<i style="left:126.2px;top:870px;width:17.9px;height:18px;background:#c3c5c5"></i>
<i style="left:143.8px;top:870px;width:17.9px;height:18px;background:#eaf7fe"></i>
<i style="left:161.4px;top:870px;width:17.9px;height:18px;background:#c4ced7"></i>
<i style="left:179.0px;top:870px;width:17.9px;height:18px;background:#d6dadd"></i>
<i style="left:196.6px;top:870px;width:17.9px;height:18px;background:#e2dfdc"></i>
<i style="left:214.2px;top:870px;width:17.9px;height:18px;background:#cfcace"></i>
<i style="left:231.8px;top:870px;width:17.9px;height:18px;background:#e6e2db"></i>
<i style="left:249.4px;top:870px;width:17.9px;height:18px;background:#bbbfbf"></i>
<i style="left:267.0px;top:870px;width:17.9px;height:18px;background:#bfc3c6"></i>
<i style="left:284.6px;top:870px;width:17.9px;height:18px;background:#b0b3c0"></i>
<i style="left:302.2px;top:870px;width:17.9px;height:18px;background:#b6bbbe"></i>
<i style="left:319.8px;top:870px;width:17.9px;height:18px;background:#b7c6d0"></i>
<i style="left:337.4px;top:870px;width:17.9px;height:18px;background:#c3bfbe"></i>
<i style="left:355.0px;top:870px;width:17.9px;height:18px;background:#ccb9ab"></i>
<i style="left:91.0px;top:923px;width:17.9px;height:18px;background:#f4ede4"></i>
<i style="left:108.6px;top:923px;width:17.9px;height:18px;background:#e3e2e0"></i>
<i style="left:126.2px;top:923px;width:17.9px;height:18px;background:#bebab4"></i>
<i style="left:91.0px;top:994px;width:17.9px;height:17px;background:#f7f1e8"></i>
<i style="left:108.6px;top:994px;width:17.9px;height:17px;background:#e4e4e2"></i>
<i style="left:126.2px;top:994px;width:17.9px;height:17px;background:#aba9a6"></i>
<i style="left:143.8px;top:994px;width:17.9px;height:17px;background:#c8bdb4"></i>
<i style="left:161.4px;top:994px;width:17.9px;height:17px;background:#cad6dc"></i>
<i style="left:179.0px;top:994px;width:17.9px;height:17px;background:#bbc3d0"></i>
<i style="left:91.0px;top:1047px;width:17.9px;height:17px;background:#fdf9f4"></i>
<i style="left:108.6px;top:1047px;width:17.9px;height:17px;background:#e6e7e4"></i>
<i style="left:126.2px;top:1047px;width:17.9px;height:17px;background:#d1d2d1"></i>
<i style="left:143.8px;top:1047px;width:17.9px;height:17px;background:#f2eee8"></i>
<i style="left:161.4px;top:1047px;width:17.9px;height:17px;background:#dad2d1"></i>
<i style="left:179.0px;top:1047px;width:17.9px;height:17px;background:#ececeb"></i>
<i style="left:196.6px;top:1047px;width:17.9px;height:17px;background:#f0eae6"></i>
<i style="left:214.2px;top:1047px;width:17.9px;height:17px;background:#d6c8c3"></i>
<i style="left:231.8px;top:1047px;width:17.9px;height:17px;background:#ebe5de"></i>
<i style="left:249.4px;top:1047px;width:17.9px;height:17px;background:#e8eae9"></i>
<i style="left:91.0px;top:1064px;width:17.9px;height:8px;background:#fdf9f4"></i>
<i style="left:108.6px;top:1064px;width:17.9px;height:8px;background:#fbfafa"></i>
<i style="left:126.2px;top:1064px;width:17.9px;height:8px;background:#e3dbd6"></i>
<i style="left:143.8px;top:1064px;width:17.9px;height:8px;background:#eaeaea"></i>
<i style="left:161.4px;top:1064px;width:17.9px;height:8px;background:#efe9ea"></i>
<i style="left:179.0px;top:1064px;width:17.9px;height:8px;background:#edf2f8"></i>
<i style="left:196.6px;top:1064px;width:17.9px;height:8px;background:#e9edf0"></i>
<i style="left:214.2px;top:1064px;width:17.9px;height:8px;background:#d6c8c1"></i>
<i style="left:231.8px;top:1064px;width:17.9px;height:8px;background:#e1d5c8"></i>
<i style="left:91px;top:517px;width:300px;height:18px;background:#f9f9f9"></i>
<i style="left:91px;top:570px;width:300px;height:18px;background:#f9f9f9"></i>
<i style="left:91px;top:1029px;width:300px;height:18px;background:#fbfbfb"></i>
<div class="r" style="left:521px;top:55px;width:22px;height:1025px;background:#ffffff;"></div>
<svg style="position:absolute;left:525.6px;top:64px" width="16" height="12" viewBox="0 0 16 12"><path d="M8 2L14 10H2z" fill="#adadad" stroke="#adadad" stroke-width="1.5" stroke-linejoin="round"/></svg>
<svg style="position:absolute;left:525px;top:1060px" width="16" height="12" viewBox="0 0 16 12"><path d="M2 2h12L8 10z" fill="#adadad" stroke="#adadad" stroke-width="1.5" stroke-linejoin="round"/></svg>
<div class="r" style="left:528px;top:716px;width:11px;height:248px;border-radius:5.5px;background:#adadad"></div>
<div class="r" style="left:543px;top:55px;width:20px;height:1025px;background:#c8d8e8;"></div>
<div class="r" style="left:551.5px;top:468px;width:1.4px;height:80px;background:linear-gradient(#c6d6e6,#3f72a8 60%,#2b66a0)"></div>
<div class="r" style="left:551.5px;top:588px;width:1.4px;height:80px;background:linear-gradient(#2b66a0,#3f72a8 40%,#c6d6e6)"></div>
<div class="r" style="left:551px;top:557.5px;width:2.6px;height:2.6px;background:#2b5f95;"></div>
<div class="r" style="left:551px;top:562.4px;width:2.6px;height:2.6px;background:#2b5f95;"></div>
<div class="r" style="left:551px;top:567.3px;width:2.6px;height:2.6px;background:#2b5f95;"></div>
<div class="r" style="left:551px;top:572.2px;width:2.6px;height:2.6px;background:#2b5f95;"></div>
<div class="r" style="left:563px;top:55px;width:1338px;height:156px;background:#eef3f8;"></div>
<div class="r" style="left:563px;top:211px;width:1338px;height:869px;background:#fafafa;"></div>
<div class="r" style="left:563px;top:208.5px;width:1338px;height:2.5px;background:#d2dfec;"></div>
<div class="r" style="left:623px;top:208.5px;width:153px;height:2.5px;background:#306ea6;"></div>
<div class="t" style="left:602.6px;top:81.80px;font-size:24.45px;color:#32363a;font-weight:normal;font-style:normal;">New System Group</div>
<svg style="position:absolute;left:0;top:0" width="1" height="1" fill="none" stroke="#2c5f90" stroke-width="1.75" stroke-linecap="round" stroke-linejoin="round">
<path d="M1771.4 83.2L1759.9 83.8V94.4"/>
<path d="M1775.6 81.8H1784.8V90.3M1784.5 82.1L1775.6 90.3"/>
<path d="M1758.6 98.4V107.9H1767.6M1759 107.4L1767.3 98.4"/>
<path d="M1783.1 94.6V106.1H1771.9"/>
</svg>
<svg style="position:absolute;left:0;top:0" width="1" height="1"><path d="M1823.2 86.3L1839.8 102.9M1839.8 86.3L1823.2 102.9" fill="none" stroke="#2c5f90" stroke-width="2.9" stroke-linecap="round"/></svg>
<div class="t" style="left:622.9px;top:174.35px;font-size:17.31px;color:#1d2124;font-weight:normal;font-style:normal;">General Information</div>
<div class="t" style="left:816.8px;top:174.87px;font-size:16.69px;color:#32363a;font-weight:normal;font-style:normal;">Systems</div>
<div class="t" style="left:643.2px;top:253.49px;font-size:16.9px;color:#6a6d70;font-weight:normal;font-style:normal;">Title:</div>
<svg style="position:absolute;left:0;top:0" width="1" height="1"><path d="M686.20 260.40L686.20 257.10M686.20 260.40L689.34 259.38M686.20 260.40L688.14 263.07M686.20 260.40L684.26 263.07M686.20 260.40L683.06 259.38" stroke="#bb3a3a" stroke-width="1.6" stroke-linecap="round"/></svg>
<div class="r" style="left:643px;top:282px;width:521px;height:49.5px;border:1px solid #b8b8b8;background:#fff"></div>
<div class="t" style="left:659.2px;top:298.59px;font-size:17.02px;color:#1d2124;font-weight:normal;font-style:normal;">Test_63667</div>
<div class="t" style="left:1241.6px;top:253.24px;font-size:17.2px;color:#6a6d70;font-weight:normal;font-style:normal;">Description:</div>
<div class="r" style="left:1242px;top:282px;width:550px;height:116.5px;border:1px solid #b8b8b8;background:#fff"></div>
<div class="t" style="left:642.8px;top:359.18px;font-size:17.15px;color:#6a6d70;font-weight:normal;font-style:normal;">Product:</div>
<svg style="position:absolute;left:0;top:0" width="1" height="1"><path d="M714.20 366.30L714.20 363.00M714.20 366.30L717.34 365.28M714.20 366.30L716.14 368.97M714.20 366.30L712.26 368.97M714.20 366.30L711.06 365.28" stroke="#bb3a3a" stroke-width="1.6" stroke-linecap="round"/></svg>
<div class="r" style="left:643px;top:388.3px;width:521px;height:49.4px;border:1px solid #b8b8b8;background:#fff"></div>
<div class="t" style="left:659.7px;top:404.12px;font-size:17.1px;color:#1d2124;font-weight:normal;font-style:normal;">Unspecific On-Premise System</div>
<svg style="position:absolute;left:1130px;top:406px" width="18" height="12" viewBox="0 0 18 12"><path d="M2 2.5l7 7 7-7" fill="none" stroke="#2c5f90" stroke-width="1.3"/></svg>
<div class="r" style="left:615px;top:345px;width:577px;height:115px;border:4.6px solid #e10000"></div>
<div class="r" style="left:563px;top:483.5px;width:1338px;height:1.5px;background:#ededed;"></div>
<div class="t" style="left:623.75px;top:502.35px;font-size:26.29px;color:#32363a;font-weight:normal;font-style:normal;">Systems</div>
<div class="r" style="left:623px;top:563px;width:1218px;height:55px;background:#178381;"></div>
<div class="t" style="left:652.6px;top:581.96px;font-size:17.3px;color:#ffffff;font-weight:normal;font-style:normal;-webkit-text-stroke:0.45px #fff">Starter / Preview</div>
<div class="t" style="left:896.3px;top:581.96px;font-size:17.3px;color:#ffffff;font-weight:normal;font-style:normal;-webkit-text-stroke:0.45px #fff">Development</div>
<div class="t" style="left:1140px;top:581.96px;font-size:17.3px;color:#ffffff;font-weight:normal;font-style:normal;-webkit-text-stroke:0.45px #fff">Quality Assurance</div>
<div class="t" style="left:1383.8px;top:581.96px;font-size:17.3px;color:#ffffff;font-weight:normal;font-style:normal;-webkit-text-stroke:0.45px #fff">Pre-production</div>
<div class="t" style="left:1627.5px;top:581.96px;font-size:17.3px;color:#ffffff;font-weight:normal;font-style:normal;-webkit-text-stroke:0.45px #fff">Production</div>
<div class="r" style="left:643.2px;top:628.3px;width:218.5px;height:71.8px;border:1.2px dashed #8e8e8e;border-radius:3px;background:#fff"></div>
<div class="t" style="left:664.0px;top:651.52px;font-size:19.35px;color:#32363a;font-weight:normal;font-style:normal;">+ Assign System</div>
<div class="r" style="left:886.5px;top:628.3px;width:218.5px;height:71.8px;border:1.2px dashed #8e8e8e;border-radius:3px;background:#fff"></div>
<div class="t" style="left:907.3px;top:651.52px;font-size:19.35px;color:#32363a;font-weight:normal;font-style:normal;">+ Assign System</div>
<div class="r" style="left:1130.4px;top:628.3px;width:218.5px;height:71.8px;border:1.2px dashed #8e8e8e;border-radius:3px;background:#fff"></div>
<div class="t" style="left:1151.2px;top:651.52px;font-size:19.35px;color:#32363a;font-weight:normal;font-style:normal;">+ Assign System</div>
<div class="r" style="left:1374.2px;top:628.3px;width:218.5px;height:71.8px;border:1.2px dashed #8e8e8e;border-radius:3px;background:#fff"></div>
<div class="t" style="left:1395.0px;top:651.52px;font-size:19.35px;color:#32363a;font-weight:normal;font-style:normal;">+ Assign System</div>
<div class="r" style="left:1617.8px;top:628.3px;width:218.5px;height:71.8px;border:1.2px dashed #8e8e8e;border-radius:3px;background:#fff"></div>
<div class="t" style="left:1638.6px;top:651.52px;font-size:19.35px;color:#32363a;font-weight:normal;font-style:normal;">+ Assign System</div>
<div class="r" style="left:1901px;top:55px;width:19px;height:1025px;background:#ffffff;"></div>
<svg style="position:absolute;left:1902px;top:64px" width="16" height="12" viewBox="0 0 16 12"><path d="M8 2L14 10H2z" fill="#adadad" stroke="#adadad" stroke-width="1.5" stroke-linejoin="round"/></svg>
<svg style="position:absolute;left:1902px;top:1060px" width="16" height="12" viewBox="0 0 16 12"><path d="M2 2h12L8 10z" fill="#adadad" stroke="#adadad" stroke-width="1.5" stroke-linejoin="round"/></svg>
<div class="r" style="left:1905px;top:84px;width:11px;height:764px;border-radius:5.5px;background:#adadad"></div>
<div class="r" style="left:573px;top:1010px;width:1318px;height:59.5px;border-radius:4px;background:#424f5c;box-shadow:0 0 6px rgba(0,0,0,0.15)"></div>
<div class="r" style="left:1720px;top:1015px;width:70px;height:50px;border-radius:4px;background:#5396cd"></div>
<div class="t" style="left:1735.8px;top:1031.45px;font-size:16.6px;color:#ffffff;font-weight:normal;font-style:normal;-webkit-text-stroke:0.45px #fff">Save</div>
<div class="t" style="left:1815.7px;top:1031.01px;font-size:17.12px;color:#d1e8ff;font-weight:normal;font-style:normal;">Cancel</div>
</body></html>
